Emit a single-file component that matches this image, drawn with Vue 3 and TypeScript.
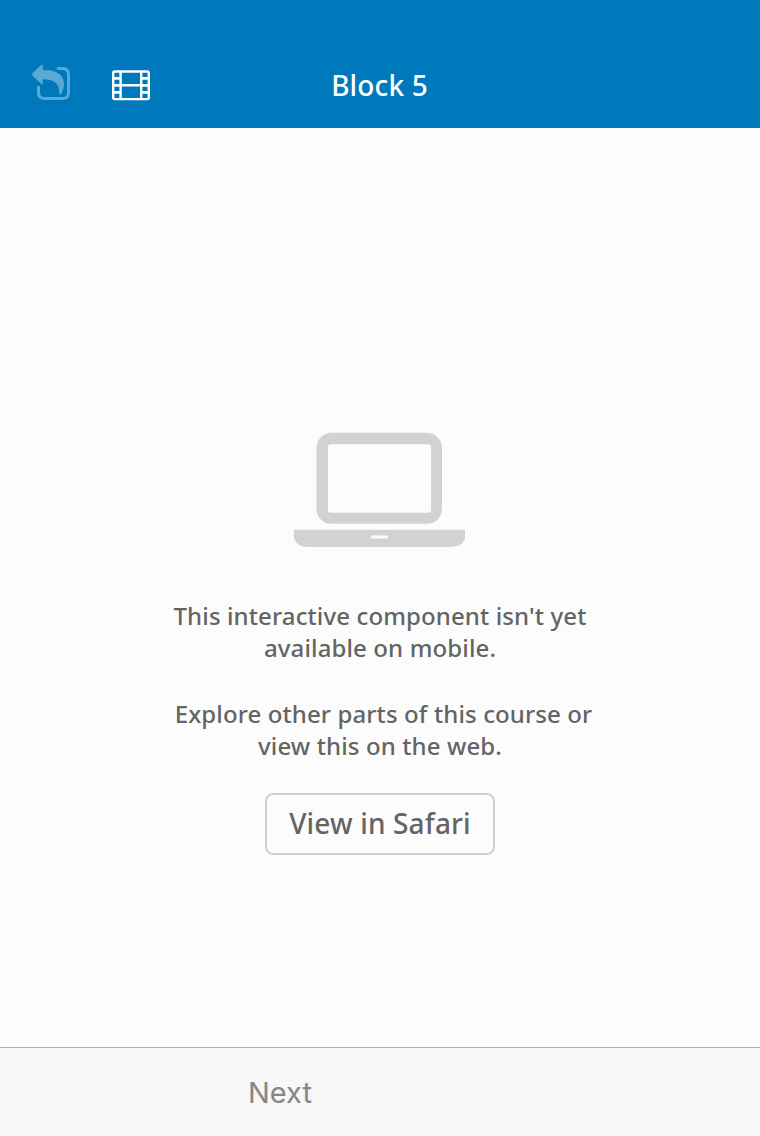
<script setup lang="ts">
const title: string = 'Block 5'
const perforations: number[] = [9, 16, 23]
</script>

<template>
  <div class="screen">
    <header class="bar">
      <div class="tools">
        <svg class="back" width="40" height="38" viewBox="0 0 40 38">
          <path d="M27 4.500h4.500q6 0 6 6v18q0 6-6 6h-18q-6 0-6-6v-5.500" fill="none" stroke="currentColor" stroke-width="3" stroke-linecap="round" />
          <path d="M1.400 9.200 10.300.8Q11.800-.2 11.800 1.500V6C23 5.500 33 9.500 33 19.500c0 4-1 7.500-3 10.300-.8 1-1.800.7-1.700-.5C28.500 21 25 15.300 11.800 15.300v4.200q0 1.800-1.500.6L1.400 11.500q-1-1.100 0-2.300Z" fill="currentColor" />
        </svg>
        <svg class="film" width="40" height="32" viewBox="0 0 40 32">
          <rect x="2.200" y="2.500" width="35.600" height="27.600" rx="1.500" fill="none" stroke="currentColor" stroke-width="2.400" />
          <path d="M9.600 2v28M30.200 2v28M10 16.300h20" stroke="currentColor" stroke-width="2.400" />
          <path v-for="y in perforations" :key="y" :d="`M2 ${y + 0.3}h8M30 ${y + 0.3}h8`" stroke="currentColor" stroke-width="2.800" />
        </svg>
      </div>
      <h1>{{ title }}</h1>
    </header>
    <main>
      <svg class="laptop" width="172" height="116" viewBox="0 0 172 116">
        <path fill-rule="evenodd" d="M37.500.8h95.500a15 15 0 0 1 15 15v61a15 15 0 0 1-15 15H37.500a15 15 0 0 1-15-15v-61a15 15 0 0 1 15-15Zm-1 11.400a2.500 2.500 0 0 0-2.500 2.500v63.500a2.500 2.500 0 0 0 2.500 2.500h98a2.500 2.500 0 0 0 2.500-2.500V14.700a2.500 2.500 0 0 0-2.500-2.500Z" />
        <path fill-rule="evenodd" d="M0 97.800h171v8.200q-2 8.500-14 9H14q-12-.5-14-9Zm78 5.700a1.500 1.500 0 0 0 0 3h14.500a1.500 1.500 0 0 0 0-3Z" />
      </svg>
      <p class="first">This interactive component isn't yet<br />available on mobile.</p>
      <p class="second"><span>Explore other parts of this course or</span><br />view this on the web.</p>
      <button type="button">View in Safari</button>
    </main>
    <footer><span>Next</span></footer>
  </div>
</template>

<style>
body { margin: 0; background: #fcfcfc; }
</style>

<style scoped>
.screen {
  display: flex;
  flex-direction: column;
  width: 760px;
  height: 1136px;
  background: #fcfcfc;
  font-family: "Noto Sans", "Open Sans", sans-serif;
}
.bar {
  display: grid;
  grid-template-columns: 1fr auto 1fr;
  box-sizing: border-box;
  height: 128px;
  padding: 40px 0 0 31px;
  background: #0079bc;
  color: #fff;
}
.tools { display: flex; align-items: flex-start; }
.back { margin-top: 24px; color: #59a8d5; overflow: visible; }
.film { margin: 29px 0 0 40px; }
h1 {
  margin: 25px 32px 0 0;
  font-size: 28px;
  line-height: 40px;
  font-weight: 500;
  letter-spacing: 0.15px;
  white-space: nowrap;
}
main {
  display: flex;
  flex: 1;
  flex-direction: column;
  align-items: center;
  color: #646464;
}
.laptop { margin-top: 304px; fill: #d3d1d2; }
p {
  margin: 0;
  font-size: 24px;
  line-height: 32px;
  font-weight: 500;
  letter-spacing: 0.12px;
  text-align: center;
  white-space: nowrap;
}
.first { margin-top: 52px; }
.second { margin-top: 34px; }
.second span { margin-right: -7px; }
button {
  box-sizing: border-box;
  width: 230px;
  height: 62px;
  margin-top: 31px;
  padding: 0 0 2px;
  border: 2px solid #d1d1d1;
  border-radius: 8px;
  background: transparent;
  color: #646464;
  font: 500 28px/40px "Noto Sans", "Open Sans", sans-serif;
  letter-spacing: 0.15px;
}
footer {
  box-sizing: border-box;
  height: 89px;
  padding: 25px 0 0 248px;
  border-top: 1px solid #acacac;
  background: #f7f7f7;
  color: #868686;
  font: 400 29px/40px Inter, sans-serif;
}
</style>
